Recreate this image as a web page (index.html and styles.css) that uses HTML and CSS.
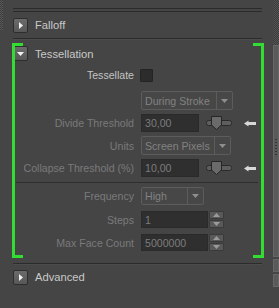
FILE: index.html
```html
<!DOCTYPE html>
<html>
<head>
<meta charset="utf-8">
<link rel="stylesheet" href="styles.css">
</head>
<body>
<div class="screen">
  <div class="edge"><div class="edge-dots"></div></div>
  <div class="main">
    <div class="rule-pair"></div>
    <div class="rhead">
      <div class="tog"><svg width="4" height="7" viewBox="0 0 4 7"><polygon points="0,0 4,3.5 0,7" fill="#f2f2f2"/></svg></div>
      <span class="rtitle">Falloff</span>
    </div>
    <div class="rule"></div>

    <div class="rollout">
      <div class="rhead open">
        <div class="tog"><svg width="7" height="4" viewBox="0 0 7 4"><polygon points="0,0 7,0 3.5,4" fill="#f2f2f2"/></svg></div>
        <span class="rtitle">Tessellation</span>
      </div>

      <div class="row r-check">
        <span class="lbl on">Tessellate</span>
        <div class="ctl"><div class="check"></div></div>
      </div>

      <div class="row r-dd1">
        <span class="lbl"></span>
        <div class="ctl"><div class="dd w92"><span class="ddtext">During Stroke</span><span class="ddarrow"><svg width="7" height="4" viewBox="0 0 7 4"><polygon points="0,0 7,0 3.5,4" fill="#8e8e8e"/></svg></span></div></div>
      </div>

      <div class="row r-num">
        <span class="lbl">Divide Threshold</span>
        <div class="ctl">
          <div class="inp w58">30,00</div>
          <svg class="slider" width="26" height="14" viewBox="0 0 26 14"><rect x="0.5" y="4.5" width="25" height="5" rx="2" fill="#5e5e5e" stroke="#2a2a2a"/><polygon points="5.5,0.5 15.5,0.5 15.5,9 10.5,13.5 5.5,9" fill="#6a6a6a" stroke="#262626"/></svg>
          <svg class="pin" width="12" height="7" viewBox="0 0 12 7"><polygon points="0,3.5 4.5,0.5 4.5,2 12,2 12,5 4.5,5 4.5,6.5" fill="#d8d8d8"/></svg>
        </div>
      </div>

      <div class="row r-dd2">
        <span class="lbl">Units</span>
        <div class="ctl"><div class="dd w90"><span class="ddtext">Screen Pixels</span><span class="ddarrow"><svg width="7" height="4" viewBox="0 0 7 4"><polygon points="0,0 7,0 3.5,4" fill="#8e8e8e"/></svg></span></div></div>
      </div>

      <div class="row r-num">
        <span class="lbl">Collapse Threshold (%)</span>
        <div class="ctl">
          <div class="inp w58">10,00</div>
          <svg class="slider" width="26" height="14" viewBox="0 0 26 14"><rect x="0.5" y="4.5" width="25" height="5" rx="2" fill="#5e5e5e" stroke="#2a2a2a"/><polygon points="5.5,0.5 15.5,0.5 15.5,9 10.5,13.5 5.5,9" fill="#6a6a6a" stroke="#262626"/></svg>
          <svg class="pin" width="12" height="7" viewBox="0 0 12 7"><polygon points="0,3.5 4.5,0.5 4.5,2 12,2 12,5 4.5,5 4.5,6.5" fill="#d8d8d8"/></svg>
        </div>
      </div>

      <div class="sep"></div>

      <div class="row r-dd3">
        <span class="lbl">Frequency</span>
        <div class="ctl"><div class="dd w63"><span class="ddtext">High</span><span class="ddarrow"><svg width="7" height="4" viewBox="0 0 7 4"><polygon points="0,0 7,0 3.5,4" fill="#8e8e8e"/></svg></span></div></div>
      </div>

      <div class="row r-spin">
        <span class="lbl">Steps</span>
        <div class="ctl">
          <div class="inp w67">1</div>
          <div class="spin">
            <div class="sb"><svg width="7" height="4" viewBox="0 0 7 4"><polygon points="0,4 7,4 3.5,0" fill="#9a9a9a"/></svg></div>
            <div class="sb"><svg width="7" height="4" viewBox="0 0 7 4"><polygon points="0,0 7,0 3.5,4" fill="#9a9a9a"/></svg></div>
          </div>
        </div>
      </div>

      <div class="row r-spin">
        <span class="lbl">Max Face Count</span>
        <div class="ctl">
          <div class="inp w67">5000000</div>
          <div class="spin">
            <div class="sb"><svg width="7" height="4" viewBox="0 0 7 4"><polygon points="0,4 7,4 3.5,0" fill="#9a9a9a"/></svg></div>
            <div class="sb"><svg width="7" height="4" viewBox="0 0 7 4"><polygon points="0,0 7,0 3.5,4" fill="#9a9a9a"/></svg></div>
          </div>
        </div>
      </div>
    </div>

    <div class="rule low"></div>
    <div class="rhead adv">
      <div class="tog"><svg width="4" height="7" viewBox="0 0 4 7"><polygon points="0,0 4,3.5 0,7" fill="#f2f2f2"/></svg></div>
      <span class="rtitle">Advanced</span>
    </div>
  </div>
  <div class="scroll">
    <div class="trough"></div>
    <div class="thumb"><div class="grip"></div></div>
    <div class="sbtn"></div>
    <div class="sbtn"></div>
  </div>
</div>
</body>
</html>
```

FILE: styles.css
```css
html, body {
  margin: 0;
  padding: 0;
  background: #454545;
}
body {
  width: 279px;
  height: 308px;
  overflow: hidden;
  font-family: "Liberation Sans", Arial, sans-serif;
  font-size: 10.6px;
  color: #c8c8c8;
}
.screen {
  display: grid;
  grid-template-columns: 3px 270px 6px;
  height: 308px;
}
.edge-dots {
  width: 3px;
  height: 30px;
  background: repeating-conic-gradient(#5a5a5a 0 25%, #3c3c3c 0 50%) 0 0 / 2px 2px;
}
.main {
  display: flex;
  flex-direction: column;
}
.rule-pair {
  margin: 8px 0 0 10px;
  width: 249px;
  height: 2px;
  border-top: 1px solid #2b2b2b;
  border-bottom: 1px solid #2b2b2b;
}
.rhead {
  display: flex;
  align-items: center;
  gap: 7px;
  height: 26px;
  padding-left: 10px;
}
.tog {
  width: 15px;
  height: 15px;
  box-sizing: border-box;
  border: 1px solid #2e2e2e;
  border-radius: 2px;
  background: linear-gradient(#6b6b6b, #575757);
  display: flex;
  align-items: center;
  justify-content: center;
}
.tog svg { display: block; }
.rtitle {
  font-size: 11.2px;
  color: #c9c9c9;
}
.rule {
  margin: 0 0 4px 10px;
  width: 249px;
  height: 1px;
  background: #2b2b2b;
  box-shadow: 0 1px 0 #4c4c4c;
}
.rule.low { margin: 5px 0 0 10px; }
.rhead.adv { height: 26px; margin-top: 0; }

.rollout {
  position: relative;
  margin-left: 9px;
  width: 252px;
  height: 215px;
  box-sizing: border-box;
  display: flex;
  flex-direction: column;
}
.rollout::before,
.rollout::after {
  content: "";
  position: absolute;
  top: 0;
  bottom: 0;
  width: 8px;
  border: 3px solid #33dc33;
  filter: drop-shadow(0 0 0.5px #000);
  z-index: 2;
}
.rollout::before { left: 0; border-right: none; }
.rollout::after { right: 0; border-left: none; }

.rhead.open {
  height: 15px;
  margin-top: 3px;
  padding-left: 1px;
}
.row {
  display: grid;
  grid-template-columns: 122px 1fr;
  column-gap: 7px;
  align-items: center;
}
.lbl {
  text-align: right;
  color: #7a7a7a;
  white-space: nowrap;
}
.lbl.on { color: #c4c4c4; }
.ctl {
  display: flex;
  align-items: center;
  height: 100%;
}
.r-check { height: 16px; margin-top: 6px; }
.r-dd1 { height: 19px; margin-top: 8px; }
.r-num { height: 18px; margin-top: 4px; }
.r-dd2 { height: 19px; margin-top: 4px; }
.r-dd3 { height: 18px; margin-top: 4px; }
.r-spin { height: 17px; margin-top: 6px; }

.check {
  width: 13px;
  height: 13px;
  box-sizing: border-box;
  background: #2c2c2c;
  border: 1px solid #242424;
  border-radius: 1px;
  margin-left: -1px;
}
.dd {
  display: flex;
  height: 100%;
  box-sizing: border-box;
  border: 1px solid #5c5c5c;
  border-radius: 2px;
  background: #474747;
  color: #828282;
}
.w92 { width: 92px; }
.w90 { width: 90px; }
.w63 { width: 63px; }
.ddtext {
  flex: 1;
  padding-left: 3px;
  display: flex;
  align-items: center;
}
.ddarrow {
  width: 15px;
  border-left: 1px solid #5c5c5c;
  display: flex;
  align-items: center;
  justify-content: center;
}
.ddarrow svg { display: block; }
.inp {
  height: 100%;
  box-sizing: border-box;
  background: #2f2f2f;
  border: 1px solid #2a2a2a;
  color: #7c7c7c;
  padding-left: 3px;
  display: flex;
  align-items: center;
}
.w58 { width: 58px; }
.w67 { width: 67px; }
.slider { display: block; margin-left: 7px; }
.pin { display: block; margin-left: 12px; }

.sep {
  margin: 5px 6px 0 4px;
  height: 1px;
  background: #2e2e2e;
}

.spin {
  display: flex;
  flex-direction: column;
  gap: 1px;
  margin-left: 1px;
  height: 100%;
}
.sb {
  flex: 1;
  width: 15px;
  box-sizing: border-box;
  background: #595959;
  border: 1px solid #3a3a3a;
  border-radius: 1px;
  display: flex;
  align-items: center;
  justify-content: center;
}
.sb svg { display: block; }

.scroll {
  display: flex;
  flex-direction: column;
}
.trough {
  height: 45px;
  background: repeating-conic-gradient(#555 0 25%, #3a3a3a 0 50%) 0 0 / 2px 2px;
}
.thumb {
  height: 212px;
  box-sizing: border-box;
  background: #5a5a5a;
  border: 1px solid #666;
  display: flex;
  align-items: center;
  justify-content: center;
}
.grip {
  width: 2px;
  height: 18px;
  margin-top: -6px;
  background: repeating-linear-gradient(#333 0 1px, transparent 1px 3px);
}
.sbtn {
  height: 13px;
  margin-top: 2px;
  box-sizing: border-box;
  background: #5a5a5a;
  border: 1px solid #666;
}
```
